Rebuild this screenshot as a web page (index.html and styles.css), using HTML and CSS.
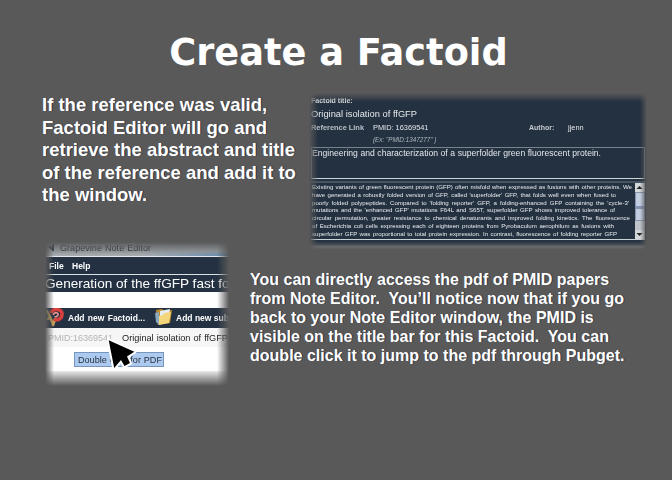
FILE: index.html
```html
<!DOCTYPE html>
<html lang="en">
<head>
<meta charset="utf-8">
<title>Create a Factoid</title>
<link rel="stylesheet" href="styles.css">
</head>
<body>
<main class="slide">
  <h1>Create a Factoid</h1>
  <section class="upper">
    <p class="intro">If the reference was valid,<br>Factoid Editor will go and<br>retrieve the abstract and title<br>of the reference and add it to<br>the window.</p>
    <div class="factoid">
      <div class="caption"><span class="ln w40">Factoid title:</span></div>
      <div class="name"><span class="ln w106">Original isolation of ffGFP</span></div>
      <div class="meta"><b class="ln link">Reference Link</b><span class="ln pmid">PMID: 16369541</span><b class="ln author">Author:</b><span class="ln user">jjenn</span></div>
      <div class="example"><i class="ln w60">(Ex: "PMID:1347277" )</i></div>
      <div class="paper"><span class="ln w289">Engineering and characterization of a superfolder green fluorescent protein.</span></div>
      <div class="abstract">
        <div class="lines">
          <div class="ln a1">Existing variants of green fluorescent protein (GFP) often misfold when expressed as fusions with other proteins. We</div>
          <div class="ln a2">have generated a robustly folded version of GFP, called 'superfolder' GFP, that folds well even when fused to</div>
          <div class="ln a3">poorly folded polypeptides. Compared to 'folding reporter' GFP, a folding-enhanced GFP containing the 'cycle-3'</div>
          <div class="ln a4">mutations and the 'enhanced GFP' mutations F64L and S65T, superfolder GFP shows improved tolerance of</div>
          <div class="ln a5">circular permutation, greater resistance to chemical denaturants and improved folding kinetics. The fluorescence</div>
          <div class="ln a6">of Escherichia coli cells expressing each of eighteen proteins from Pyrobaculum aerophilum as fusions with</div>
          <div class="ln a7">superfolder GFP was proportional to total protein expression. In contrast, fluorescence of folding reporter GFP</div>
        </div>
        <div class="scroll">
          <svg viewBox="0 0 9 8"><path d="M1.5 5.5 4.5 2.5 7.5 5.5Z"/></svg>
          <div class="thumb"></div>
          <svg viewBox="0 0 9 8"><path d="M1.5 2.5 4.5 5.5 7.5 2.5Z"/></svg>
        </div>
      </div>
    </div>
  </section>
  <section class="lower">
    <div class="editor">
      <div class="bar"><svg class="app" viewBox="0 0 8 10"><path d="M6 2V9M2 4 5 7" /></svg><span class="ln w91">Grapevine Note Editor</span></div>
      <div class="menu"><span class="ln file">File</span><span class="ln help">Help</span></div>
      <div class="heading">Generation of the ffGFP fast fo</div>
      <div class="tools">
        <svg class="pin" viewBox="0 0 18 19"><path d="M1 3 4 9 7 16M4 9 2 11M9 11 7 17" stroke="#c6a25c" stroke-width="2.6" stroke-linecap="round"/><path d="M5 5C7-1 17 1 16 7S9 12 8 11" stroke="#d9403d" stroke-width="3.6"/><path d="M7 7C9 3 13 5 12 7S9 9 9 8" stroke="#ee9a91" stroke-width="1.6"/></svg>
        <span class="ln addf">Add new Factoid...</span>
        <svg class="folder" viewBox="0 0 19 18"><path d="M2 2 8 1 10 3 18 2 16 15 4 17Z" fill="#c18b2b"/><path d="M6 3 16 1 14 12 6 13Z" fill="#e6eef5"/><path d="M1 5 5 4 5 17 2 14Z" fill="#88a9bf"/><path d="M5 8 9 7 10 5 17 4 15 15 5 17Z" fill="#f4d77d"/></svg>
        <span class="adds">Add new sub</span>
      </div>
      <div class="entry"><span class="ln number">PMID:16369541</span><span class="ln w106">Original isolation of ffGFP</span></div>
      <div class="body"><div class="pdf"><span class="ln w84">Double click for PDF</span></div></div>
      <div class="foot"></div>
      <svg class="cursor" viewBox="0 0 34 40"><path d="M3.7 4.3 9.2 32 16 24 19.5 30 25 27 22 20.5 29.3 15.8Z" fill="#000" stroke="#fff" stroke-width="4" stroke-linejoin="round" paint-order="stroke"/></svg>
    </div>
    <p class="note">You can directly access the pdf of PMID papers<br>from Note Editor.&nbsp; You’ll notice now that if you go<br>back to your Note Editor window, the PMID is<br>visible on the title bar for this Factoid.&nbsp; You can<br>double click it to jump to the pdf through Pubget.</p>
  </section>
</main>
</body>
</html>
```
FILE: styles.css
```css
* { box-sizing: border-box; }
body { margin: 0; background: #595959; }
.slide { width: 672px; height: 480px; overflow: hidden; background: #595959; color: #fff; font-family: "Liberation Sans", Arial, sans-serif; }
h1 { margin: 0; padding: 31px 0 0 5px; height: 93px; text-align: center; font: bold 36.7px/44px "DejaVu Sans", Verdana, sans-serif; }
p { margin: 0; font-weight: bold; white-space: nowrap; text-shadow: 1px 0 0 #30303a; }
.upper { display: flex; height: 149px; }
.intro { width: 309px; padding: 1px 0 0 42px; font-size: 18.5px; line-height: 22.5px; }
.ln { display: block; flex: none; white-space: nowrap; text-align: justify; text-align-last: justify; }
.w40 { width: 40px; }
.w60 { width: 60px; }
.w84 { width: 84px; }
.w91 { width: 91px; }
.w106 { width: 106px; }
.w289 { width: 289px; }

.factoid, .editor {
  mask-composite: intersect;
  -webkit-mask-composite: source-in;
}
.factoid {
  width: 338px; height: 157px; padding: 3px 2px 0; color: #e4e8ec;
  background: linear-gradient(#243140 0 148px, #3d4650 151px, #707070 154px, #626262);
  mask-image: linear-gradient(90deg, transparent, #000 9px calc(100% - 7px), transparent), linear-gradient(transparent, #000 9px calc(100% - 4px), transparent);
}
.caption { height: 10px; font: bold 7px/9px "Liberation Sans"; color: #d9dde1; }
.name { height: 16px; font-size: 9.3px; line-height: 16px; }
.meta { display: flex; height: 12px; font-size: 7.4px; line-height: 12px; }
.link { width: 52px; margin-right: 10px; color: #b9c0c8; }
.pmid { width: 55px; margin-right: 101px; }
.author { width: 25px; margin-right: 14px; font-size: 7px; color: #c5cbd1; }
.user { width: 17px; }
.example { height: 13px; padding-left: 62px; font-size: 6.3px; line-height: 11px; color: #aeb6be; }
.paper { height: 32px; border: 1px solid #78828c; border-bottom: 1px solid #cbd2d8; font-size: 8.6px; line-height: 11px; }
.abstract { display: flex; justify-content: space-between; height: 59px; margin-top: 2px; border-top: 2px solid #465361; border-bottom: 1px solid #c8d0d6; overflow: hidden; }
.lines { padding: 0 0 0 1px; font-size: 6.1px; line-height: 7.8px; color: #e8ecef; }
.a1 { width: 320px; }
.a2 { width: 304px; }
.a3 { width: 317px; }
.a4 { width: 303px; }
.a5 { width: 318px; }
.a6 { width: 302px; }
.a7 { width: 305px; }
.scroll { display: flex; flex-direction: column; width: 10px; height: 57px; background: #bfc4ca; }
.scroll svg { width: 9px; height: 9px; background: #d4d7da; fill: #222; }
.thumb { height: 29px; margin-bottom: 9px; border: 1px solid #8695ae; background: linear-gradient(transparent 13px, #8294b0 13px 16px, transparent 16px), #c2cde0; }

.lower { display: flex; }
.editor {
  position: relative; width: 187px; height: 145px; margin-left: 44px; background: #fff; overflow: hidden;
  mask-image: linear-gradient(90deg, transparent 1px, #000 10px calc(100% - 14px), transparent calc(100% - 2px)), linear-gradient(transparent, #000 13px calc(100% - 16px), transparent calc(100% - 1px));
}
.bar { display: flex; gap: 5px; height: 15px; padding-left: 3px; background: linear-gradient(90deg, #a5abb0 55%, transparent), linear-gradient(#9fa6ac 9px, #6389b0 13px); border-bottom: 1px solid #e5e8ea; color: #262c33; font-size: 9.1px; line-height: 12px; }
.app { width: 8px; height: 10px; fill: none; stroke: #29333f; stroke-width: 2; }
.menu { display: flex; height: 17px; padding-left: 5px; background: #233142; font: bold 8.5px/19px "Liberation Sans"; }
.file { width: 15px; margin-right: 8px; }
.help { width: 20px; }
.heading { height: 18px; padding-left: 1px; border-top: 1px solid #dce1e5; background: #233142; font-size: 13.6px; line-height: 17px; white-space: nowrap; }
.tools { display: flex; height: 20px; margin-top: 16px; background: #233142; font: bold 8.5px/20px "Liberation Sans"; white-space: nowrap; }
.pin { width: 18px; height: 19px; margin: 0 4px 0 2px; fill: none; }
.addf { width: 77px; margin-right: 9px; }
.folder { width: 19px; height: 18px; margin-right: 3px; }
.entry { display: flex; height: 19px; padding-left: 4px; background: #f6f6f6; color: #222; font-size: 9.2px; line-height: 21px; }
.number { width: 66px; margin-right: 8px; color: #b5b5b5; font-size: 9px; }
.body { height: 24px; padding: 5px 0 0 30px; }
.pdf { width: 90px; height: 15px; padding-left: 3px; border: 1px solid #7896bd; background: #accaf0; color: #28313e; font-size: 9.1px; line-height: 14px; }
.foot { height: 20px; background: #e9e9e9; }
.cursor { position: absolute; left: 61px; top: 94px; width: 34px; height: 40px; }
.note { padding: 28px 0 0 19px; font-size: 16.03px; line-height: 19.05px; }
```
